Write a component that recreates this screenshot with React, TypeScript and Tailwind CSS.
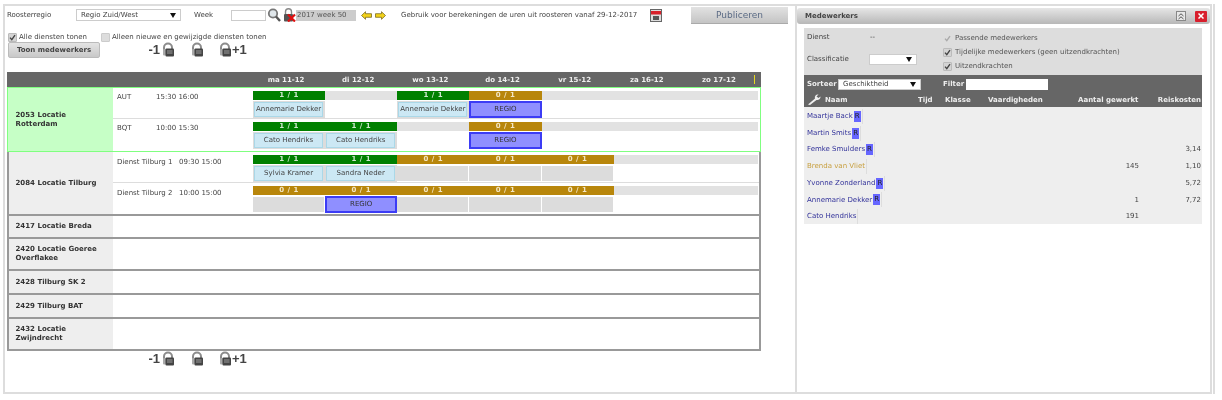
import React from 'react';

type Day = { bar?: 'g' | 'o'; cell?: string };

const dayLabels = ['ma 11-12', 'di 12-12', 'wo 13-12', 'do 14-12', 'vr 15-12', 'za 16-12', 'zo 17-12'];

function Lock() {
	return (
		<svg width="13" height="15" viewBox="0 0 13 15">
			<path d="M2 12V5.500a4 4 0 0 1 8 0V7" fill="none" stroke="#8c8c8c" strokeWidth="2" />
			<rect x="1" y="7" width="3" height="6.500" rx="1" fill="#aaa" />
			<rect x="3.500" y="6.500" width="8.500" height="8" rx="1" fill="#444" />
			<rect x="5" y="8" width="5.500" height="4" fill="#707070" />
		</svg>
	);
}

function LockRow() {
	return (
		<div className="flex items-center h-[14px] text-[13px] font-bold text-[#444] font-['Liberation_Sans',sans-serif]">
			<span className="w-[15px] text-right leading-none">-1</span>
			<span className="ml-[2px]"><Lock /></span>
			<span className="ml-[16px]"><Lock /></span>
			<span className="ml-[15px]"><Lock /></span>
			<span className="leading-none">+1</span>
		</div>
	);
}

function Checkbox({ dim }: { dim?: boolean }) {
	return (
		<span className={`flex items-center justify-center w-[9px] h-[9px] shrink-0 rounded-[1px] border ${dim ? 'border-[#ddd] bg-[#ddd]' : 'border-[#bbb] bg-[#d4d4d4]'}`}>
			<svg width="7" height="7" viewBox="0 0 7 7">
				<path d="M1 3.600 2.800 5.600 6 1.200" fill="none" stroke={dim ? '#aaa' : '#444'} strokeWidth="1.400" />
			</svg>
		</span>
	);
}

function FakeSelect({ value, className }: { value: string; className: string }) {
	return (
		<div className={`flex items-center justify-between bg-white border border-[#ccc] pl-[4px] pr-[4px] text-[#444] ${className}`}>
			<span>{value}</span>
			<svg width="6" height="5" viewBox="0 0 6 5"><path d="M0 0h6L3 5z" fill="#111" /></svg>
		</div>
	);
}

function DayCell({ day }: { day: Day }) {
	return (
		<div className="w-[72.15px] shrink-0">
			<div className={`h-[9px] leading-[9px] text-center font-bold text-[7px] tracking-[0.5px] ${day.bar === 'g' ? 'bg-[#008000] text-[#cfe8cf]' : day.bar === 'o' ? 'bg-[#b8860b] text-[#f3e6c4]' : 'bg-[#e2e2e2]'}`}>
				{day.bar === 'g' ? '1 / 1' : day.bar === 'o' ? '0 / 1' : ''}
			</div>
			{day.cell === 'REGIO' && (
				<div className="mt-[1px] h-[17px] bg-[#8f8fff] border-2 border-[#3c3cf5] text-[#333] text-center leading-[13px]">REGIO</div>
			)}
			{day.cell === 'empty' && <div className="mt-[2px] h-[15px] mr-[1px] bg-[#dcdcdc]" />}
			{day.cell && day.cell !== 'REGIO' && day.cell !== 'empty' && (
				<div className="mt-[1px] h-[17px] bg-[#dcdcdc] p-[1px] pr-[2px]">
					<div className="h-[15px] bg-[#cce8f4] border border-[#aad8e8] text-[#444] text-center leading-[13px] whitespace-nowrap">{day.cell}</div>
				</div>
			)}
		</div>
	);
}

function ShiftRow({ label, time, timeWidth, days, line, height, textTop }: { label: string; time: string; timeWidth: string; days: Day[]; line?: boolean; height: string; textTop: string }) {
	return (
		<div className={`flex ${height} ${line ? 'border-b border-[#ddd]' : ''}`}>
			<div className={`w-[140px] shrink-0 flex pl-[4px] text-[#444] ${textTop}`}>
				<span className={timeWidth}>{label}</span>
				<span>{time}</span>
			</div>
			<div className="flex pt-[3px] h-fit">
				{days.map((d, i) => <DayCell key={i} day={d} />)}
			</div>
		</div>
	);
}

function EmptyLocation({ title, height }: { title: string; height: string }) {
	return (
		<div className={`flex ${height} border-b-2 border-[#999]`}>
			<div className="w-[104px] bg-[#eee] flex items-center pl-[6.5px] pr-[6px] font-bold text-[#333] leading-[9px]">{title}</div>
		</div>
	);
}

const employees = [
	{ name: 'Maartje Back', r: true },
	{ name: 'Martin Smits', r: true },
	{ name: 'Femke Smulders', r: true, cost: '3,14' },
	{ name: 'Brenda van Vliet', gold: true, worked: '145', cost: '1,10' },
	{ name: 'Yvonne Zonderland', r: true, cost: '5,72' },
	{ name: 'Annemarie Dekker', r: true, worked: '1', cost: '7,72' },
	{ name: 'Cato Hendriks', worked: '191' },
];

export default function App() {
	return (
		<div className="w-[1222px] h-[400px] bg-white overflow-hidden flex pt-[4px] pl-[3px] text-[7px] text-[#444] blur-[0.3px] font-['DejaVu_Sans',sans-serif]">
			{/* Rooster */}
			<div className="w-[792px] h-[390px] border-2 border-r-0 border-[#ddd] shrink-0">
				<div className="flex h-[26px]">
					<div className="flex items-center h-[18px] pl-[2px]">
						<span className="w-[69px]">Roosterregio</span>
						<FakeSelect value="Regio Zuid/West" className="w-[105px] h-[12px]" />
						<span className="ml-[13px] w-[37px]">Week</span>
						<div className="w-[35px] h-[11px] bg-white border border-[#ccc]" />
						<svg className="ml-[1px]" width="14" height="14" viewBox="0 0 14 14">
							<circle cx="6" cy="5.500" r="4.200" fill="#dfe6ea" stroke="#777" strokeWidth="1.800" />
							<path d="M9 8.500 13 13" stroke="#555" strokeWidth="2.400" />
						</svg>
						<svg className="ml-[2px]" width="13" height="14" viewBox="0 0 13 14">
							<path d="M2.500 6V3.800a3 3 0 0 1 6 0V6" fill="none" stroke="#888" strokeWidth="1.400" />
							<rect x="1" y="6" width="9" height="7.500" rx="1" fill="#555" />
							<path d="M5 6.500 12 13.500M12 6.500 5 13.500" stroke="#e01010" strokeWidth="2.200" />
						</svg>
						<div className="w-[60px] h-[11px] bg-[#ccc] leading-[11px] pl-[1px] text-[#555]">2017 week 50</div>
						<svg className="ml-[5px]" width="11" height="9" viewBox="0 0 11 9">
							<path d="M.5 4.500 4.500.7v2h6v3.600h-6v2z" fill="#f2d21a" stroke="#6b5a10" strokeWidth=".7" />
						</svg>
						<svg className="ml-[3px]" width="11" height="9" viewBox="0 0 11 9">
							<path d="M10.500 4.500 6.500.7v2h-6v3.600h6v2z" fill="#f2d21a" stroke="#6b5a10" strokeWidth=".7" />
						</svg>
						<span className="ml-[15px] w-[249px]">Gebruik voor berekeningen de uren uit roosteren vanaf 29-12-2017</span>
						<svg width="12" height="13" viewBox="0 0 12 13">
							<rect x=".5" y=".5" width="11" height="12" fill="#ddd" stroke="#666" />
							<rect x="1" y="2" width="10" height="3.500" fill="#d8202a" />
							<rect x="3" y="7" width="6" height="4" fill="#555" />
						</svg>
						<div className="ml-[29px] w-[97px] h-[17px] bg-gradient-to-b from-[#e2e2e2] to-[#c4c4c4] border-b border-[#aaa] text-center text-[9px] leading-[16px] text-[#5b6b85]">Publiceren</div>
					</div>
				</div>
				<div className="flex items-center h-[10px] pl-[3px]">
					<Checkbox />
					<span className="ml-[2px] w-[82px]">Alle diensten tonen</span>
					<span className="flex items-center justify-center w-[9px] h-[9px] bg-[#ddd] border border-[#ccc] rounded-[1px]" />
					<span className="ml-[2px]">Alleen nieuwe en gewijzigde diensten tonen</span>
				</div>
				<div className="flex h-[17px] pl-[3px]">
					<div className="w-[92px] h-[16px] bg-gradient-to-b from-[#e4e4e4] to-[#c8c8c8] border border-[#bbb] rounded-[2px] text-center font-bold leading-[14px] text-[#444]">Toon medewerkers</div>
					<div className="ml-[45px]"><LockRow /></div>
				</div>

				{/* Tabel */}
				<div className="ml-[2px] mt-[13px] w-[754px]">
					<div className="relative flex h-[15px] bg-[#666] pl-[243px] font-bold text-[#eee] leading-[17px]">
						{dayLabels.map(label => <span key={label} className="w-[72.15px] text-center shrink-0">{label}</span>)}
						<span className="absolute left-[747px] top-[3px] w-[1px] h-[9px] bg-[#e6d820]" />
					</div>

					<div className="flex border border-[#80ff80]">
						<div className="w-[105px] shrink-0 bg-[#c6ffc6] flex items-center pl-[7.5px] pr-[6px] font-bold text-[#333] leading-[9px]">2053 Locatie Rotterdam</div>
						<div className="flex-1">
							<ShiftRow line height="h-[31px]" textTop="pt-[4px]" label="AUT" time="15:30 16:00" timeWidth="w-[39px]"
								days={[{ bar: 'g', cell: 'Annemarie Dekker' }, {}, { bar: 'g', cell: 'Annemarie Dekker' }, { bar: 'o', cell: 'REGIO' }, {}, {}, {}]} />
							<ShiftRow height="h-[32px]" textTop="pt-[4px]" label="BQT" time="10:00 15:30" timeWidth="w-[39px]"
								days={[{ bar: 'g', cell: 'Cato Hendriks' }, { bar: 'g', cell: 'Cato Hendriks' }, {}, { bar: 'o', cell: 'REGIO' }, {}, {}, {}]} />
						</div>
					</div>

					<div className="border-x-2 border-[#999]">
						<div className="flex border-b-2 border-[#999]">
							<div className="w-[104px] shrink-0 bg-[#eee] flex items-center pl-[6.5px] font-bold text-[#333]">2084 Locatie Tilburg</div>
							<div className="flex-1">
								<ShiftRow line height="h-[31px]" textTop="pt-[5px]" label="Dienst Tilburg 1" time="09:30 15:00" timeWidth="w-[62px]"
									days={[{ bar: 'g', cell: 'Sylvia Kramer' }, { bar: 'g', cell: 'Sandra Neder' }, { bar: 'o', cell: 'empty' }, { bar: 'o', cell: 'empty' }, { bar: 'o', cell: 'empty' }, {}, {}]} />
								<ShiftRow height="h-[31px]" textTop="pt-[5px]" label="Dienst Tilburg 2" time="10:00 15:00" timeWidth="w-[62px]"
									days={[{ bar: 'o', cell: 'empty' }, { bar: 'o', cell: 'REGIO' }, { bar: 'o', cell: 'empty' }, { bar: 'o', cell: 'empty' }, { bar: 'o', cell: 'empty' }, {}, {}]} />
							</div>
						</div>
						<EmptyLocation title="2417 Locatie Breda" height="h-[23px]" />
						<EmptyLocation title="2420 Locatie Goeree Overflakee" height="h-[32px]" />
						<EmptyLocation title="2428 Tilburg SK 2" height="h-[24px]" />
						<EmptyLocation title="2429 Tilburg BAT" height="h-[24px]" />
						<EmptyLocation title="2432 Locatie Zwijndrecht" height="h-[32px]" />
					</div>
				</div>
				<div className="ml-[140px]"><LockRow /></div>
			</div>

			{/* Medewerkers */}
			<div className="w-[420px] h-[390px] border-r-2 border-[#ddd] shrink-0 pr-[1px]">
				<div className="h-full border-2 border-[#ddd] pt-[2px]">
					<div className="flex items-center h-[16px] w-[413px] rounded-[3px] bg-gradient-to-b from-[#e6e6e6] to-[#b8b8b8] pl-[8px] font-bold text-[#444]">
						<span className="flex-1">Medewerkers</span>
						<span className="flex items-center justify-center w-[10px] h-[10px] border border-[#888] bg-[#e8e8e8] mr-[9px]">
							<svg width="6" height="7" viewBox="0 0 6 7"><path d="M.5 3 3 .8 5.500 3M.5 6 3 3.800 5.500 6" fill="none" stroke="#555" /></svg>
						</span>
						<span className="flex items-center justify-center w-[12px] h-[11px] bg-[#d81e2c] rounded-[1px] mr-[3px]">
							<svg width="6" height="6" viewBox="0 0 6 6"><path d="M.5.5l5 5M5.500.5l-5 5" stroke="#fff" strokeWidth="1.500" /></svg>
						</span>
					</div>

					<div className="ml-[7px] mt-[4px] w-[398px]">
						<div className="flex h-[47px] bg-[#ddd] pl-[3px]">
							<div className="w-[136px] shrink-0">
								<div className="flex pt-[4px] h-[20px]">
									<span className="w-[63px]">Dienst</span>
									<span>--</span>
								</div>
								<div className="flex items-center h-[20px] mt-[1px]">
									<span className="w-[62px]">Classificatie</span>
									<FakeSelect value="" className="w-[48px] h-[11px]" />
								</div>
							</div>
							<div className="pt-[3px]">
								<div className="flex items-center h-[14px] gap-[3px]"><Checkbox dim /><span className="text-[#555]">Passende medewerkers</span></div>
								<div className="flex items-center h-[14px] gap-[3px]"><Checkbox /><span className="text-[#555]">Tijdelijke medewerkers (geen uitzendkrachten)</span></div>
								<div className="flex items-center h-[14px] gap-[3px]"><Checkbox /><span className="text-[#555]">Uitzendkrachten</span></div>
							</div>
						</div>

						<div className="h-[32px] bg-[#666] text-[#eee] font-bold">
							<div className="flex items-center h-[18px] pl-[3px] pt-[1px]">
								<span className="w-[31px]">Sorteer</span>
								<FakeSelect value="Geschiktheid" className="w-[83px] h-[11px] font-normal" />
								<span className="ml-[22px] w-[23px]">Filter</span>
								<div className="w-[82px] h-[11px] bg-white" />
							</div>
							<div className="relative flex items-center h-[14px]">
								<svg className="absolute left-[3px] top-[0px]" width="15" height="12" viewBox="0 0 15 12">
									<path d="M1 11.500 8 5.500a3 3 0 0 1 3.500-4L9.500 3.500l2 1.500 2-1.500a3.200 3.200 0 0 1-4 3.500L3 12z" fill="#f0f0f0" />
								</svg>
								<div className="grid grid-cols-[93px_27px_43px_90px_60px_64px] w-full pl-[21px] items-center whitespace-nowrap">
									<span>Naam</span>
									<span>Tijd</span>
									<span>Klasse</span>
									<span>Vaardigheden</span>
									<span className="text-right">Aantal gewerkt</span>
									<span className="text-right pr-[1px]">Reiskosten</span>
								</div>
							</div>
						</div>

						<div className="bg-[#eee] h-[117px] pl-[3px] pt-[1px]">
							{employees.map(e => (
								<div key={e.name} className="flex items-center h-[16.7px]">
									<div className="flex-1 flex">
										<div className="flex items-center h-[15px] border-r border-[#ddd] pr-[1px]">
											<span className={e.gold ? 'text-[#c8a040]' : 'text-[#33339a]'}>{e.name}</span>
											{e.r && <span className="ml-[1px] w-[7px] h-[11px] bg-[#6666ff] text-[#222] text-center leading-[11px]">R</span>}
										</div>
									</div>
									<span className="w-[60px] text-right">{e.worked}</span>
									<span className="w-[63px] text-right pr-[1px]">{e.cost}</span>
								</div>
							))}
						</div>
					</div>
				</div>
			</div>
		</div>
	);
}
